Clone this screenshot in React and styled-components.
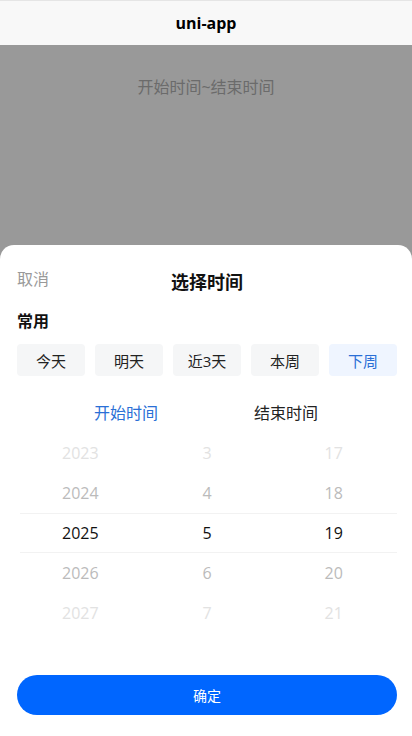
import React, { useState } from 'react';
import styled, { createGlobalStyle } from 'styled-components';

const GlobalStyle = createGlobalStyle`
  html, body {
    margin: 0;
    padding: 0;
    height: 100%;
    overflow: hidden;
  }
  body {
    font-family: "Open Sans", "Noto Sans CJK SC", sans-serif;
    color: #333;
  }
  #root {
    height: 100%;
  }
`;

const Page = styled.div`
  height: 736px;
  display: flex;
  flex-direction: column;
  background: #999;
`;

const NavBar = styled.div`
  height: 44px;
  border-top: 1px solid #e5e5e5;
  background: #f8f8f8;
  display: flex;
  align-items: center;
  justify-content: center;
  font-size: 16px;
  font-weight: 700;
  color: #000;
`;

const Body = styled.div`
  flex: 1;
  display: flex;
  flex-direction: column;
`;

const RangeText = styled.div`
  height: 200px;
  box-sizing: border-box;
  padding-top: 29px;
  text-align: center;
  font-size: 16px;
  color: #6b6b6b;
`;

const Sheet = styled.div`
  flex: 1;
  background: #fff;
  border-radius: 14px 14px 0 0;
  padding: 0 15px 0 17px;
  display: flex;
  flex-direction: column;
`;

const SheetHeader = styled.div`
  height: 66px;
  display: flex;
  align-items: center;
  justify-content: center;
  position: relative;
`;

const Cancel = styled.span`
  position: absolute;
  left: 0;
  top: 21px;
  font-size: 16px;
  color: #999;
`;

const Title = styled.span`
  font-size: 18px;
  font-weight: 700;
  color: #111;
  margin-top: 5px;
`;

const SectionLabel = styled.div`
  font-size: 16px;
  font-weight: 700;
  color: #111;
  line-height: 20px;
`;

const Chips = styled.div`
  display: grid;
  grid-template-columns: repeat(5, 1fr);
  gap: 10px;
  margin-top: 13px;
`;

const Chip = styled.div`
  height: 32px;
  border-radius: 4px;
  display: flex;
  align-items: center;
  justify-content: center;
  font-size: 15px;
  background: ${(p) => (p.$active ? '#eff5ff' : '#f5f6f7')};
  color: ${(p) => (p.$active ? '#2a6fd6' : '#222')};
`;

const Tabs = styled.div`
  display: flex;
  justify-content: center;
  margin-top: 26px;
  margin-left: -17px;
  margin-right: -15px;
`;

const Tab = styled.div`
  width: 160px;
  text-align: center;
  font-size: 16px;
  line-height: 22px;
  color: ${(p) => (p.$active ? '#2a6fd6' : '#222')};
`;

const Picker = styled.div`
  position: relative;
  margin-top: 9px;
  height: 200px;
  display: grid;
  grid-template-columns: repeat(3, 1fr);
`;

const Indicator = styled.div`
  position: absolute;
  left: 3px;
  right: 0;
  top: 80px;
  height: 40px;
  border-top: 1px solid #f2f2f2;
  border-bottom: 1px solid #f2f2f2;
  box-sizing: border-box;
  pointer-events: none;
`;

const Column = styled.div`
  display: flex;
  flex-direction: column;
`;

const Cell = styled.div`
  height: 40px;
  display: flex;
  align-items: center;
  justify-content: center;
  font-size: 16px;
  color: ${(p) => ['#e2e2e2', '#bbb', '#111', '#bbb', '#e2e2e2'][p.$pos]};
`;

const Footer = styled.div`
  margin-top: 42px;
`;

const Confirm = styled.button`
  width: 100%;
  height: 40px;
  border: none;
  border-radius: 20px;
  background: #0066ff;
  color: #fff;
  font-family: inherit;
  font-size: 14px;
`;

const quick = ['今天', '明天', '近3天', '本周', '下周'];
const columns = [
  ['2023', '2024', '2025', '2026', '2027'],
  ['3', '4', '5', '6', '7'],
  ['17', '18', '19', '20', '21'],
];

export default function App() {
  const [active, setActive] = useState(4);
  const [tab, setTab] = useState(0);

  return (
    <Page>
      <GlobalStyle />
      <NavBar>uni-app</NavBar>
      <Body>
        <RangeText>开始时间~结束时间</RangeText>
        <Sheet>
          <SheetHeader>
            <Cancel>取消</Cancel>
            <Title>选择时间</Title>
          </SheetHeader>
          <SectionLabel>常用</SectionLabel>
          <Chips>
            {quick.map((q, i) => (
              <Chip key={q} $active={i === active} onClick={() => setActive(i)}>
                {q}
              </Chip>
            ))}
          </Chips>
          <Tabs>
            <Tab $active={tab === 0} onClick={() => setTab(0)}>开始时间</Tab>
            <Tab $active={tab === 1} onClick={() => setTab(1)}>结束时间</Tab>
          </Tabs>
          <Picker>
            <Indicator />
            {columns.map((col, ci) => (
              <Column key={ci}>
                {col.map((v, i) => (
                  <Cell key={v} $pos={i}>{v}</Cell>
                ))}
              </Column>
            ))}
          </Picker>
          <Footer>
            <Confirm>确定</Confirm>
          </Footer>
        </Sheet>
      </Body>
    </Page>
  );
}
